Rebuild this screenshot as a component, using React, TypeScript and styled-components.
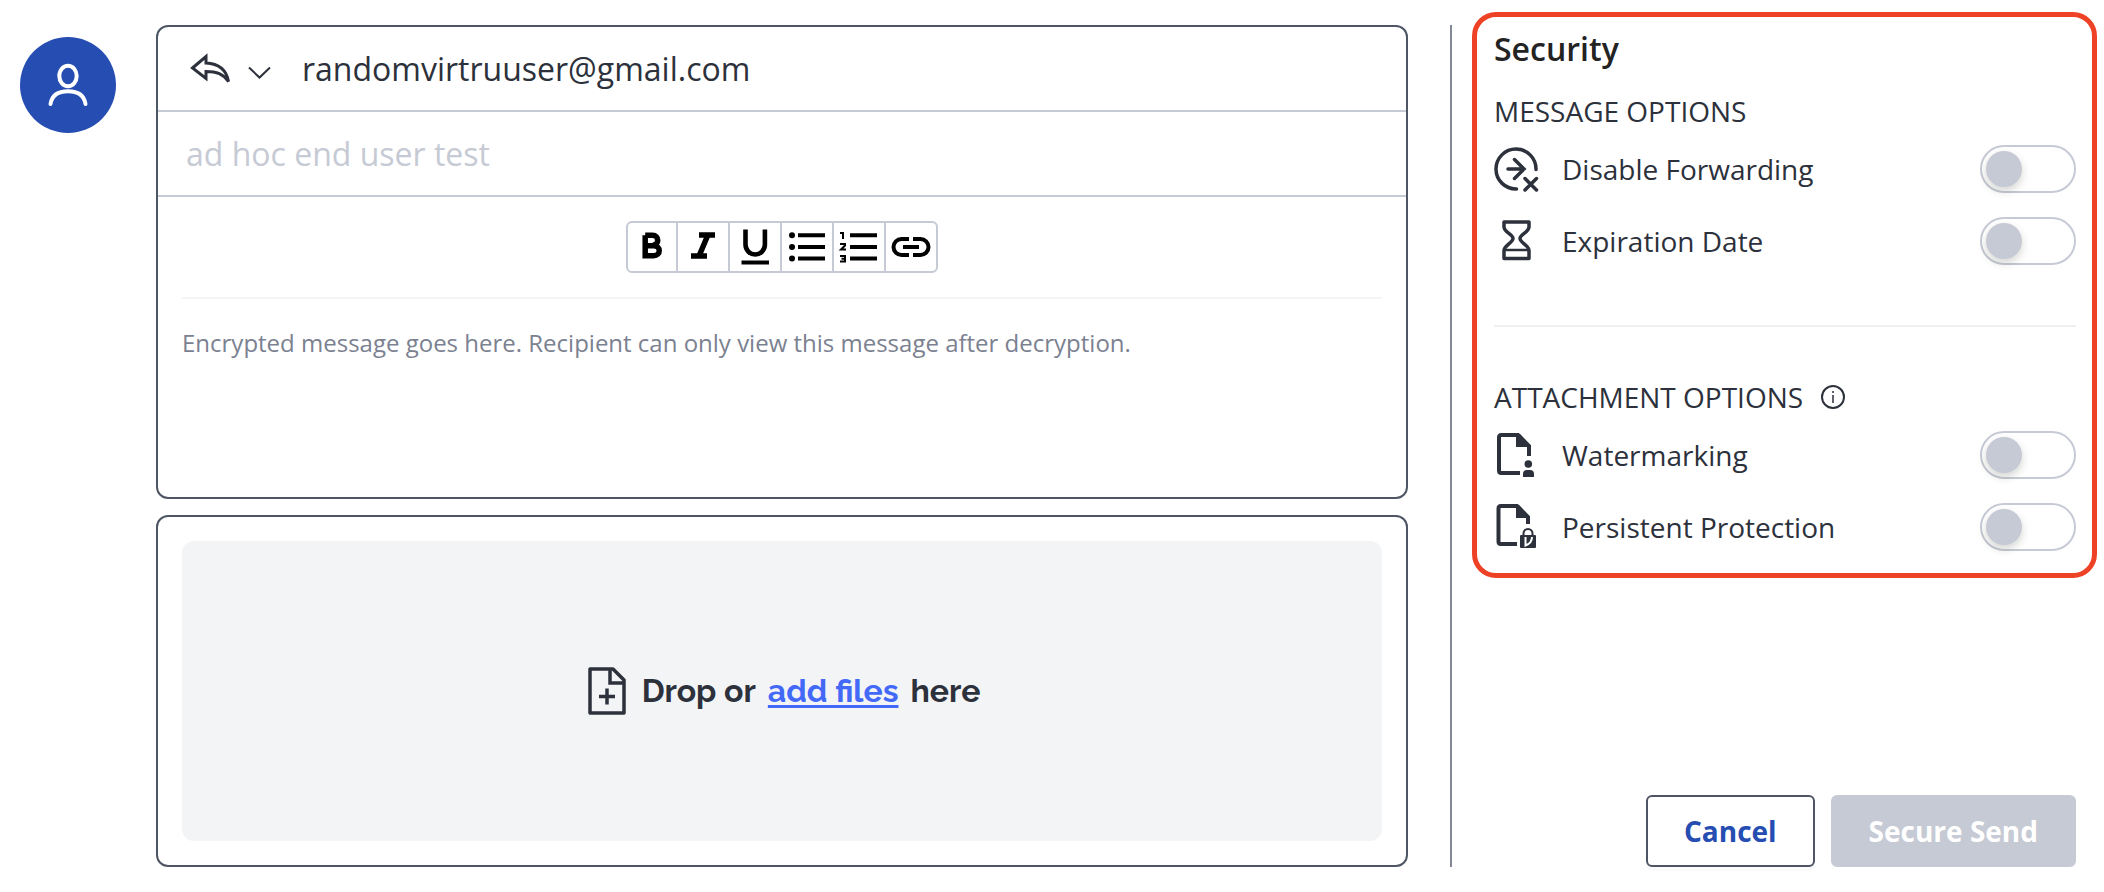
import React, { useId } from "react";
import styled, { createGlobalStyle } from "styled-components";

const ink = "#2c313b";
const frame = "#4e5564";
const rule = "#c6cad4";
const brand = "#264db1";

const GlobalStyle = createGlobalStyle`
  * { box-sizing: border-box; }
  body {
    margin: 0;
    background: #fff;
    color: ${ink};
    font-family: "Open Sans", sans-serif;
    font-size: 28px;
    line-height: 40px;
  }
  h2, h3, p { margin: 0; }
  button, input, textarea { font: inherit; color: inherit; }
  svg { display: block; flex: none; overflow: visible; }
`;

const Page = styled.div`
  display: flex;
  align-items: stretch;
  min-height: 100vh;
  padding: 12px 7px 25px 20px;
`;

const Avatar = styled.div`
  display: flex;
  align-items: center;
  justify-content: center;
  flex: none;
  width: 96px;
  height: 96px;
  margin: 25px 40px 0 0;
  border-radius: 50%;
  background: ${brand};
`;

const Compose = styled.main`
  display: grid;
  flex: 1;
  grid-template-rows: 474fr 352fr;
  gap: 16px;
  min-width: 0;
  padding-top: 13px;
`;

const Card = styled.section`
  display: flex;
  flex-direction: column;
  border: 2px solid ${frame};
  border-radius: 12px;
`;

const FilesCard = styled(Card)`
  padding: 24px;
`;

const HeaderRow = styled.div`
  display: flex;
  align-items: center;
  height: 85px;
  padding-left: 32px;
  border-bottom: 2px solid ${rule};
`;

const ReplyButton = styled.button`
  display: flex;
  align-items: center;
  gap: 14px;
  margin-right: 30px;
  padding: 0;
  border: 0;
  background: none;
  cursor: pointer;
`;

const Recipient = styled.span`
  font-size: 32px;
`;

const SubjectInput = styled.input`
  height: 85px;
  padding: 0 28px;
  border: 0;
  border-bottom: 2px solid ${rule};
  background: none;
  font-size: 32px;
  outline: none;
  &::placeholder { color: ${rule}; opacity: 1; }
`;

const Editor = styled.div`
  display: flex;
  flex: 1;
  flex-direction: column;
  padding: 24px;
`;

const Toolbar = styled.div`
  display: flex;
  align-self: center;
  height: 52px;
  border: 2px solid ${rule};
  border-radius: 6px;
`;

const ToolButton = styled.button`
  display: flex;
  align-items: center;
  justify-content: center;
  width: 52px;
  padding: 0;
  border: 0;
  border-left: 2px solid ${rule};
  background: none;
  color: #000;
  cursor: pointer;
  &:first-child { width: 48px; border-left: 0; }
`;

const MessageInput = styled.textarea`
  flex: 1;
  margin-top: 24px;
  padding: 24px 0 0;
  border: 0;
  border-top: 2px solid #f3f4f6;
  background: none;
  font-size: 24px;
  outline: none;
  resize: none;
  &::placeholder { color: #7b8190; opacity: 1; }
`;

const DropZone = styled.div`
  display: flex;
  flex: 1;
  align-items: center;
  justify-content: center;
  padding-left: 4px;
  border-radius: 12px;
  background: #f3f4f6;
`;

const DropText = styled.p`
  display: flex;
  gap: 12px;
  margin-left: 16px;
  font-family: Raleway, Lato, sans-serif;
  font-size: 32px;
  font-weight: 700;
`;

const AddLink = styled.a`
  color: #4369f8;
  text-decoration: underline;
  text-decoration-thickness: 3px;
  text-underline-offset: 3px;
`;

const Divider = styled.div`
  flex: none;
  width: 2px;
  margin: 13px 20px 0 42px;
  background: #838896;
`;

const Sidebar = styled.aside`
  display: flex;
  flex: none;
  flex-direction: column;
  justify-content: space-between;
  width: 625px;
`;

const SecurityPanel = styled.section`
  padding: 12px 16px 10px 17px;
  border: 5px solid #ee4226;
  border-radius: 24px;
`;

const PanelTitle = styled.h2`
  margin-bottom: 22px;
  color: #232323;
  font-size: 32px;
  font-weight: 600;
`;

const GroupTitle = styled.h3`
  display: flex;
  align-items: center;
  gap: 18px;
  margin-bottom: 2px;
  font-size: 28px;
  font-weight: 400;
`;

const Separator = styled.hr`
  height: 2px;
  margin: 48px 0 50px;
  border: 0;
  background: #eeeff0;
`;

const Option = styled.div`
  display: flex;
  align-items: center;
  height: 72px;
`;

const OptionIcon = styled.span`
  display: flex;
  width: 68px;
`;

const OptionLabel = styled.label`
  flex: 1;
`;

const Switch = styled.input`
  appearance: none;
  display: flex;
  align-items: center;
  width: 96px;
  height: 48px;
  margin: 0;
  padding: 0 4px;
  border: 2px solid ${rule};
  border-radius: 24px;
  cursor: pointer;
  &::before {
    content: "";
    width: 36px;
    height: 36px;
    border-radius: 50%;
    background: ${rule};
    box-shadow: 0 4px 8px rgba(60, 70, 50, 0.22);
  }
  &:checked { justify-content: flex-end; }
`;

const Actions = styled.div`
  display: flex;
  justify-content: flex-end;
  gap: 16px;
  padding-right: 21px;
`;

const ActionButton = styled.button<{ $filled?: boolean }>`
  height: 72px;
  padding: 0 36px;
  border: 2px solid ${(p) => (p.$filled ? rule : frame)};
  border-radius: 6px;
  background: ${(p) => (p.$filled ? rule : "#fff")};
  box-shadow: ${(p) => (p.$filled ? "none" : "0 4px 0 rgba(0, 0, 0, 0.02)")};
  color: ${(p) => (p.$filled ? "#fff" : brand)};
  font-weight: 700;
  cursor: pointer;
`;

const UserIcon = () => (
  <svg width="40" height="44" viewBox="0 0 40 44" fill="none" stroke="#fff" strokeWidth="4" strokeLinecap="round">
    <ellipse cx="20" cy="13" rx="8.7" ry="10.3" />
    <path d="M2.500 41C4 32 10 28.300 20 28.300S36 32 37.500 41" />
  </svg>
);

const ReplyIcon = () => (
  <svg width="44" height="36" viewBox="0 0 44 36" fill="none" stroke={ink} strokeWidth="3">
    <path d="M2.500 17 16 5.500v6.500c11 .5 20 5 22.500 18.500C33 23 27 20.500 16 20.500v7z" />
  </svg>
);

const ChevronIcon = () => (
  <svg width="24" height="24" viewBox="0 0 24 24" fill="none" stroke={ink} strokeWidth="2">
    <path d="M1 10.500 11.500 20.500 22 10.500" />
  </svg>
);

const BoldIcon = () => (
  <svg width="28" height="36" viewBox="0 0 28 36" fill="none" stroke="#000" strokeWidth="5.500">
    <path d="M7.200 6.300v20.400h8.400c7.500 0 7.500-10 0-10H7.200M7.200 6.300h7.300c7 0 7 9.900 0 9.900" />
  </svg>
);

const ItalicIcon = () => (
  <svg width="28" height="36" viewBox="0 0 28 36" fill="none" stroke="#000" strokeWidth="5.500">
    <path d="M10 6h16M2 27h16M18.500 7 10 27" />
  </svg>
);

const UnderlineIcon = () => (
  <svg width="28" height="40" viewBox="0 0 28 40" fill="none" stroke="#000">
    <path strokeWidth="4.600" d="M4.500 2.500v15a9.700 10 0 0 0 19.400 0v-15" />
    <path strokeWidth="4" d="M.5 35.500h27.500" />
  </svg>
);

const BulletIcon = () => (
  <svg width="36" height="36" viewBox="0 0 36 36" stroke="#000" strokeWidth="4">
    <path d="M9 6.300h27M9 18h27M9 29.500h27" />
    <g stroke="none"><circle cx="3" cy="6.300" r="3" /><circle cx="3" cy="18" r="3" /><circle cx="3" cy="29.500" r="3" /></g>
  </svg>
);

const NumberIcon = () => (
  <svg width="38" height="36" viewBox="0 0 38 36" fill="none" stroke="#000">
    <path strokeWidth="4" d="M10 6.300h27M10 18h27M10 29.500h27" />
    <path strokeWidth="2" d="M0 4h3v6M0 15h5v1.500L1 20.500h5M0 27h5v5.500H0M1.500 29.700H5" />
  </svg>
);

const LinkIcon = () => (
  <svg width="38" height="20" viewBox="0 0 38 20" fill="none" stroke="#000" strokeWidth="4">
    <path d="M17 2H9.500a8 8 0 0 0 0 16H17M21 2h7.500a8 8 0 0 1 0 16H21M11 10h16" />
  </svg>
);

const AddFileIcon = () => (
  <svg width="38" height="48" viewBox="0 0 38 48" fill="none" stroke={ink} strokeWidth="3.500">
    <path strokeLinejoin="round" d="M2 2h23l11 11v33H2z" />
    <path d="M22 2v14h14M19 21.500v16M11 29.500h16" />
  </svg>
);

const ForwardOffIcon = () => (
  <svg width="44" height="44" viewBox="0 0 44 44" fill="none" stroke={ink} strokeWidth="3.500" strokeLinecap="round">
    <path d="M42 22.500A20 20 0 1 0 22.500 42" />
    <path d="M14 22H30M20.500 12.500l9.500 9.500-9.500 9.500M31 31.500 42.500 43M42.500 31.500 31 43" />
  </svg>
);

const HourglassIcon = () => (
  <svg width="44" height="44" viewBox="0 0 44 44" fill="none" stroke={ink} strokeWidth="3.500" strokeLinejoin="round">
    <path d="M10 3h25v5c0 5-9 7.500-9 11.500s9 7 9 12v8H10v-8c0-5 9-8 9-12S10 13 10 8z" />
    <path d="M10 31h25" strokeWidth="2.500" />
  </svg>
);

const WatermarkIcon = () => (
  <svg width="44" height="44" viewBox="0 0 44 44" fill={ink}>
    <path d="M35 23V13L24 2H7.500Q5 2 5 4.500v33Q5 40 7.500 40H26" fill="none" stroke={ink} strokeWidth="4" />
    <path d="M22 1h4l10.700 11.500V14H22z" />
    <circle cx="34.300" cy="31" r="3.800" />
    <path d="M29 44v-3a4 4 0 0 1 4-4h3a4 4 0 0 1 4 4v3z" />
  </svg>
);

const ProtectionIcon = () => (
  <svg width="44" height="44" viewBox="0 0 44 44" fill={ink}>
    <path d="M34 19V12L23 1H7Q4.500 1 4.500 3.500v33Q4.500 39 7 39H23" fill="none" stroke={ink} strokeWidth="4" />
    <path d="M22 0h3l10.700 11.500V13H22z" />
    <path d="M29.500 31v-2.500a4.500 4.500 0 0 1 9 0V31" fill="none" stroke={ink} strokeWidth="2" />
    <rect x="26" y="30" width="16" height="13" rx="1" />
    <path d="M31.500 32v8.500c4-1.500 6.500-4.500 6.500-8.500" fill="none" stroke="#fff" strokeWidth="2" />
  </svg>
);

const InfoIcon = () => (
  <svg width="24" height="24" viewBox="0 0 24 24" fill="none" stroke={ink} strokeWidth="2">
    <circle cx="12" cy="12" r="11" />
    <path strokeWidth="1.500" d="M12 10v8M12 6v2" />
  </svg>
);

const tools = [
  { name: "Bold", Icon: BoldIcon },
  { name: "Italic", Icon: ItalicIcon },
  { name: "Underline", Icon: UnderlineIcon },
  { name: "Bulleted list", Icon: BulletIcon },
  { name: "Numbered list", Icon: NumberIcon },
  { name: "Insert link", Icon: LinkIcon },
];

function OptionRow({ label, Icon }: { label: string; Icon: React.ComponentType }) {
  const id = useId();
  return (
    <Option>
      <OptionIcon><Icon /></OptionIcon>
      <OptionLabel htmlFor={id}>{label}</OptionLabel>
      <Switch id={id} type="checkbox" role="switch" />
    </Option>
  );
}

export default function App() {
  return (
    <>
      <GlobalStyle />
      <Page>
        <Avatar><UserIcon /></Avatar>
        <Compose>
          <Card>
            <HeaderRow>
              <ReplyButton type="button" aria-label="Reply options">
                <ReplyIcon />
                <ChevronIcon />
              </ReplyButton>
              <Recipient>randomvirtruuser@gmail.com</Recipient>
            </HeaderRow>
            <SubjectInput aria-label="Subject" placeholder="ad hoc end user test" />
            <Editor>
              <Toolbar role="toolbar" aria-label="Formatting">
                {tools.map(({ name, Icon }) => (
                  <ToolButton key={name} type="button" aria-label={name}><Icon /></ToolButton>
                ))}
              </Toolbar>
              <MessageInput
                aria-label="Message"
                placeholder="Encrypted message goes here. Recipient can only view this message after decryption."
              />
            </Editor>
          </Card>
          <FilesCard>
            <DropZone>
              <AddFileIcon />
              <DropText>
                <span>Drop or</span>
                <AddLink href="#files">add files</AddLink>
                <span>here</span>
              </DropText>
            </DropZone>
          </FilesCard>
        </Compose>
        <Divider />
        <Sidebar>
          <SecurityPanel>
            <PanelTitle>Security</PanelTitle>
            <GroupTitle>MESSAGE OPTIONS</GroupTitle>
            <OptionRow label="Disable Forwarding" Icon={ForwardOffIcon} />
            <OptionRow label="Expiration Date" Icon={HourglassIcon} />
            <Separator />
            <GroupTitle>ATTACHMENT OPTIONS <InfoIcon /></GroupTitle>
            <OptionRow label="Watermarking" Icon={WatermarkIcon} />
            <OptionRow label="Persistent Protection" Icon={ProtectionIcon} />
          </SecurityPanel>
          <Actions>
            <ActionButton type="button">Cancel</ActionButton>
            <ActionButton type="button" $filled>Secure Send</ActionButton>
          </Actions>
        </Sidebar>
      </Page>
    </>
  );
}
